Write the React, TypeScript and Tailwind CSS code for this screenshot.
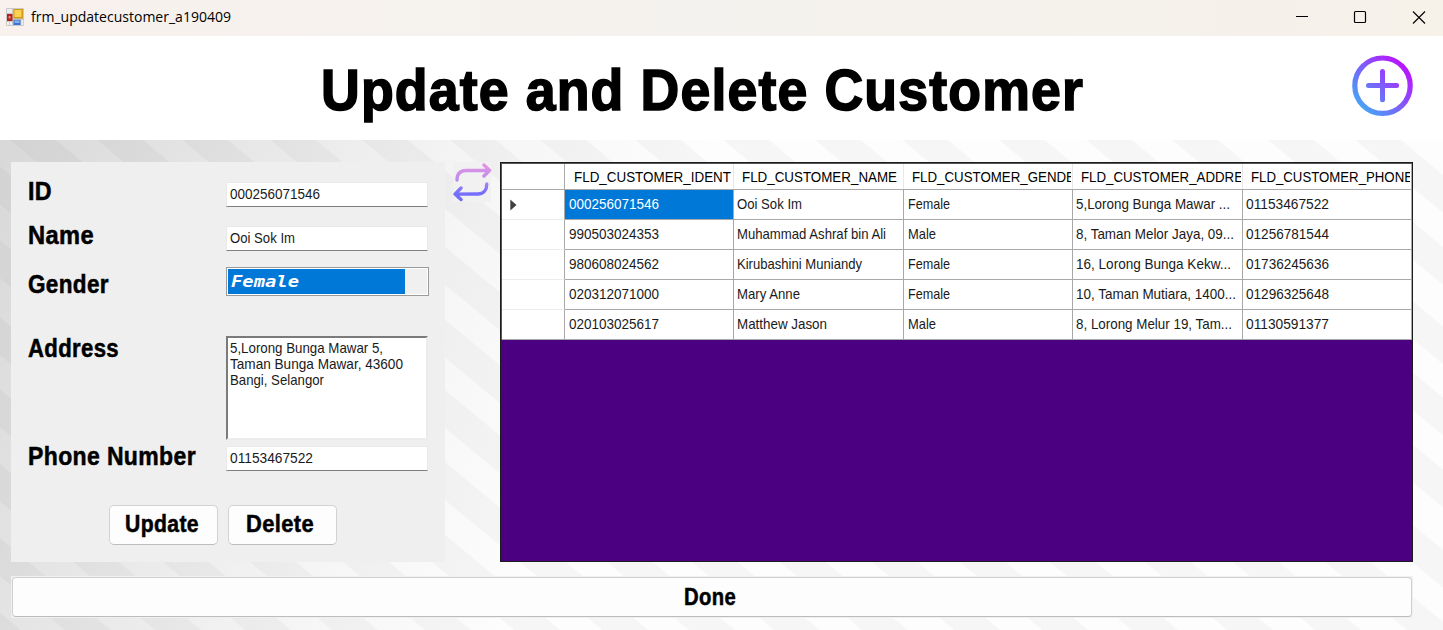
import { useLayoutEffect, useRef } from "react";
import clsx from "clsx";

/** One line of text condensed or widened to a fixed advance width. */
function Fit({ w, className, children }: { w: number; className?: string; children: string }) {
  const ref = useRef<HTMLSpanElement>(null);
  useLayoutEffect(() => {
    const el = ref.current;
    if (!el) return;
    el.style.transform = "none";
    const natural = el.getBoundingClientRect().width;
    el.style.transform = `scaleX(${w / natural})`;
  }, [w, children]);
  return (
    <span className={clsx("block shrink-0", className)} style={{ width: w }}>
      <span ref={ref} className="inline-block origin-left whitespace-pre align-top">
        {children}
      </span>
    </span>
  );
}

const stripeStarts = [
  -617, -527, -437, -347, -260, -167, -78, 10, 97, 182, 270, 362, 450, 540, 635, 723, 815, 902, 999, 1086, 1172, 1268,
  1355,
];

function Stripes() {
  return (
    <svg className="absolute inset-0 h-full w-full" viewBox="0 0 1443 490" preserveAspectRatio="none">
      <defs>
        <linearGradient id="fade" gradientUnits="userSpaceOnUse" x1="0" y1="0" x2="620" y2="240">
          <stop offset="0" stopColor="#d8d8d8" />
          <stop offset="0.3" stopColor="#e5e5e5" />
          <stop offset="0.7" stopColor="#f6f6f6" />
          <stop offset="1" stopColor="#fdfdfd" />
        </linearGradient>
      </defs>
      <rect width="1443" height="490" fill="url(#fade)" />
      {stripeStarts.map((x) => (
        <polygon
          key={x}
          points={`${x},0 ${x + 46},0 ${x + 46 + 592},490 ${x + 592},490`}
          fill="#000"
          fillOpacity="0.028"
        />
      ))}
    </svg>
  );
}

function FormIcon() {
  return (
    <svg className="h-[18px] w-[18px]" viewBox="0 0 18 18">
      <rect width="18" height="18" rx="1" fill="#c9c9c9" />
      <rect x="1" y="1" width="5" height="4" fill="#ececec" />
      <rect x="1" y="6" width="5.5" height="7" fill="#b3231d" />
      <rect x="2.6" y="8" width="2" height="2.5" fill="#e8897c" />
      <rect x="1" y="14" width="2" height="3" fill="#f4f4f4" />
      <rect x="4" y="14" width="2" height="3" fill="#f4f4f4" />
      <rect x="7.5" y="1" width="9.5" height="9.5" fill="#d39a11" />
      <rect x="8.5" y="2" width="7" height="7" fill="#fbd253" />
      <rect x="7.5" y="11.8" width="7" height="5.2" fill="#3c74d4" />
      <rect x="8.5" y="12.5" width="5" height="2.5" fill="#7fb0f4" />
      <rect x="15.4" y="12" width="1.8" height="5" fill="#f1f1f1" />
    </svg>
  );
}

const headers: [string, number][] = [
  ["FLD_CUSTOMER_IDENT", 157],
  ["FLD_CUSTOMER_NAME", 155],
  ["FLD_CUSTOMER_GENDE", 163],
  ["FLD_CUSTOMER_ADDRE", 162],
  ["FLD_CUSTOMER_PHONE", 162],
];

const rows: [string, number][][] = [
  [["000256071546", 90], ["Ooi Sok Im", 65], ["Female", 42], ["5,Lorong Bunga Mawar ...", 154], ["01153467522", 83]],
  [["990503024353", 90], ["Muhammad Ashraf bin Ali", 149], ["Male", 28], ["8, Taman Melor Jaya, 09...", 158], ["01256781544", 83]],
  [["980608024562", 90], ["Kirubashini Muniandy", 125], ["Female", 42], ["16, Lorong Bunga Kekw...", 155], ["01736245636", 83]],
  [["020312071000", 90], ["Mary Anne", 63], ["Female", 42], ["10, Taman Mutiara, 1400...", 160], ["01296325648", 83]],
  [["020103025617", 90], ["Matthew Jason", 90], ["Male", 28], ["8, Lorong Melur 19, Tam...", 156], ["01130591377", 83]],
];

const columns = "grid grid-cols-[63px_169px_170px_169px_170px_169px]";

function CustomerGrid() {
  return (
    <div className="h-[400px] w-[913px] border border-[#1c1c1c] bg-[#4b0081]">
      <div className="border-t border-l border-[#555]">
        <div className={clsx(columns, "h-[26px] border-b border-[#a8a8a8] bg-white")}>
          <div className="border-r border-[#a8a8a8]" />
          {headers.map(([t, w], i) => (
            <div
              key={t}
              className={clsx(
                "flex items-center border-r",
                i === 0 ? "pl-[9px]" : "pl-2",
                i === 4 ? "border-[#a8a8a8]" : "border-[#e8e8e8]",
              )}
            >
              <div className={clsx("flex flex-1 overflow-hidden pb-px leading-[17px]", i > 1 && "mr-px")}>
                <Fit w={w}>{t}</Fit>
              </div>
            </div>
          ))}
        </div>
        {rows.map((row, r) => (
          <div key={r} className={clsx(columns, "h-[30px] bg-white")}>
            <div
              className={clsx(
                "flex items-center border-r border-b border-r-[#a8a8a8] pl-2",
                r === 4 ? "border-b-[#a8a8a8]" : "border-b-[#ececec]",
              )}
            >
              {r === 0 && (
                <svg className="h-3 w-[7px]" viewBox="0 0 7 12">
                  <path d="M0.3 0.5 L6.5 6 L0.3 11.5Z" fill="#404040" />
                </svg>
              )}
            </div>
            {row.map(([t, w], c) => (
              <div
                key={c}
                className={clsx(
                  "flex items-center overflow-hidden border-r border-b border-[#a8a8a8] pb-[2px]",
                  c === 0 || c === 2 ? "pl-1" : "pl-[3px]",
                  r === 0 && c === 0 ? "bg-[#0078d7] text-white" : "text-[#1a1a1a]",
                )}
              >
                <Fit w={w}>{t}</Fit>
              </div>
            ))}
          </div>
        ))}
      </div>
    </div>
  );
}

function TextField({ value, w, className }: { value: string; w: number; className?: string }) {
  return (
    <div
      className={clsx(
        "flex h-[25px] w-[202px] items-center border border-[#e9e9e9] border-b-[#7f7f7f] bg-white pb-[2px] pl-[3px] text-[#1a1a1a]",
        className,
      )}
    >
      <Fit w={w}>{value}</Fit>
    </div>
  );
}

function PushButton({ label, w, className }: { label: string; w: number; className: string }) {
  return (
    <button
      className={clsx(
        "flex h-10 w-[109px] items-center rounded-[5px] border border-[#d2d2d2] border-b-[#bdbdbd] bg-[#fdfdfd] pb-px text-[23px] font-bold tracking-[0.4px] text-black [-webkit-text-stroke:0.5px_black]",
        className,
      )}
    >
      <Fit w={w}>{label}</Fit>
    </button>
  );
}

export default function App() {
  return (
    <div className="flex h-[630px] w-[1443px] flex-col overflow-hidden bg-white font-['Liberation_Sans',sans-serif] text-[15px] leading-none text-black">
      <div className="flex h-9 shrink-0 items-center bg-linear-to-r from-[#f8f1ee] via-[#f4f2ee] to-[#f6f1e9] pl-[6px] pb-[3px]">
        <FormIcon />
        <Fit w={200} className="ml-[7px] font-['Open_Sans',sans-serif] text-[14.5px] leading-5">
          frm_updatecustomer_a190409
        </Fit>
        <svg className="ml-auto h-8 w-[147px]" viewBox="0 0 147 32" fill="none" stroke="#000">
          <path d="M0 15.5H12" />
          <rect x="58.5" y="10.5" width="11" height="11" rx="1" strokeWidth="1.2" />
          <path d="M117 10.5L129 22.5M129 10.5L117 22.5" strokeWidth="1.1" />
        </svg>
      </div>

      <header className="flex h-[104px] shrink-0 items-start pl-[321px]">
        <Fit
          w={763}
          className="mt-[24px] text-[57px] leading-[60px] font-bold tracking-[1.2px] [-webkit-text-stroke:1.6px_black]"
        >
          Update and Delete Customer
        </Fit>
        <svg className="mt-[19px] ml-[268px] h-[61px] w-[61px]" viewBox="0 0 61 61" fill="none">
          <defs>
            <linearGradient id="plus" gradientUnits="userSpaceOnUse" x1="8" y1="52" x2="52" y2="10">
              <stop offset="0" stopColor="#45a5f5" />
              <stop offset="1" stopColor="#b914ff" />
            </linearGradient>
          </defs>
          <g stroke="url(#plus)" strokeLinecap="round">
            <circle cx="30.5" cy="30.7" r="27.7" strokeWidth="5.2" />
            <path d="M30.5 16.5V44.7M16.5 30.6H44.6" strokeWidth="5" />
          </g>
        </svg>
      </header>

      <main className="relative h-[490px] shrink-0 overflow-hidden">
        <Stripes />
        <div className="relative flex flex-col pt-[22px] pl-[11px]">
          <div className="flex">
            <section className="h-[400px] w-[434px] bg-[#efefef]">
              <div className="flex h-[342px] pl-[17px]">
                <div className="flex w-[198px] flex-col pt-4 text-[25px] leading-[26px] font-bold tracking-[0.4px] [-webkit-text-stroke:0.5px_black]">
                  <Fit w={24}>ID</Fit>
                  <Fit w={66} className="mt-[18px]">Name</Fit>
                  <Fit w={81} className="mt-[23px]">Gender</Fit>
                  <Fit w={91} className="mt-[38px]">Address</Fit>
                  <Fit w={168} className="mt-[82px]">Phone Number</Fit>
                </div>
                <div className="flex flex-col pt-5">
                  <TextField value="000256071546" w={90} />
                  <TextField value="Ooi Sok Im" w={65} className="mt-[19px]" />
                  <div className="mt-4 flex h-[29px] w-[203px] border border-[#9a9a9a] bg-white p-px">
                    <div className="flex h-full w-[177px] items-center bg-[#0078d7] pt-[3px] pl-[3px] font-['DejaVu_Sans_Mono',monospace] text-[15.5px] font-bold text-white italic">
                      <Fit w={68}>Female</Fit>
                    </div>
                    <div className="h-full flex-1 bg-[#f0f0f0]" />
                  </div>
                  <div className="mt-10 h-[104px] w-[202px] border-2 border-t-[#7b7b7b] border-r-[#ececec] border-b-[#ececec] border-l-[#7b7b7b] bg-white pt-[2px] pl-[2px] leading-4 text-[#1a1a1a]">
                    <Fit w={153}>5,Lorong Bunga Mawar 5,</Fit>
                    <Fit w={173}>Taman Bunga Mawar, 43600</Fit>
                    <Fit w={94}>Bangi, Selangor</Fit>
                  </div>
                  <TextField value="01153467522" w={83} className="mt-[6px]" />
                </div>
              </div>
              <div className="flex gap-[10px] pt-px pl-[98px]">
                <PushButton label="Update" w={74} className="pl-[15px]" />
                <PushButton label="Delete" w={68} className="pl-[17px]" />
              </div>
            </section>

            <div className="ml-2 h-10 w-[38px] bg-[#f1f1f1]">
              <svg className="h-10 w-[39px]" viewBox="0 0 39 40" fill="none">
                <defs>
                  <linearGradient id="swap" gradientUnits="userSpaceOnUse" x1="0" y1="3" x2="0" y2="38">
                    <stop offset="0" stopColor="#e394e0" />
                    <stop offset="0.4" stopColor="#bd8cf0" />
                    <stop offset="0.75" stopColor="#7a70fb" />
                    <stop offset="1" stopColor="#6a6cf8" />
                  </linearGradient>
                </defs>
                <g stroke="url(#swap)" strokeWidth="3.4" strokeLinecap="round" strokeLinejoin="round">
                  <path d="M4 18C4 12 7 8.5 13 8.5L36 8.4M31 3L36.6 8.4L31 14" />
                  <path d="M33.8 22C33.8 28 30.5 32 25 32L2 32.1M8 26L2 32.1L8 37.5" />
                </g>
              </svg>
            </div>

            <div className="ml-[9px]">
              <CustomerGrid />
            </div>
          </div>

          <div className="mt-[14px] h-[42px] w-[1402px] bg-[#f0f0f0] p-px">
            <button className="flex h-10 w-full items-center rounded-[4px] border border-[#d0d0d0] border-b-[#bcbcbc] bg-[#fdfdfd] pl-[671px] text-[23px] font-bold tracking-[0.4px] [-webkit-text-stroke:0.5px_black]">
              <Fit w={52}>Done</Fit>
            </button>
          </div>
        </div>
      </main>
    </div>
  );
}
